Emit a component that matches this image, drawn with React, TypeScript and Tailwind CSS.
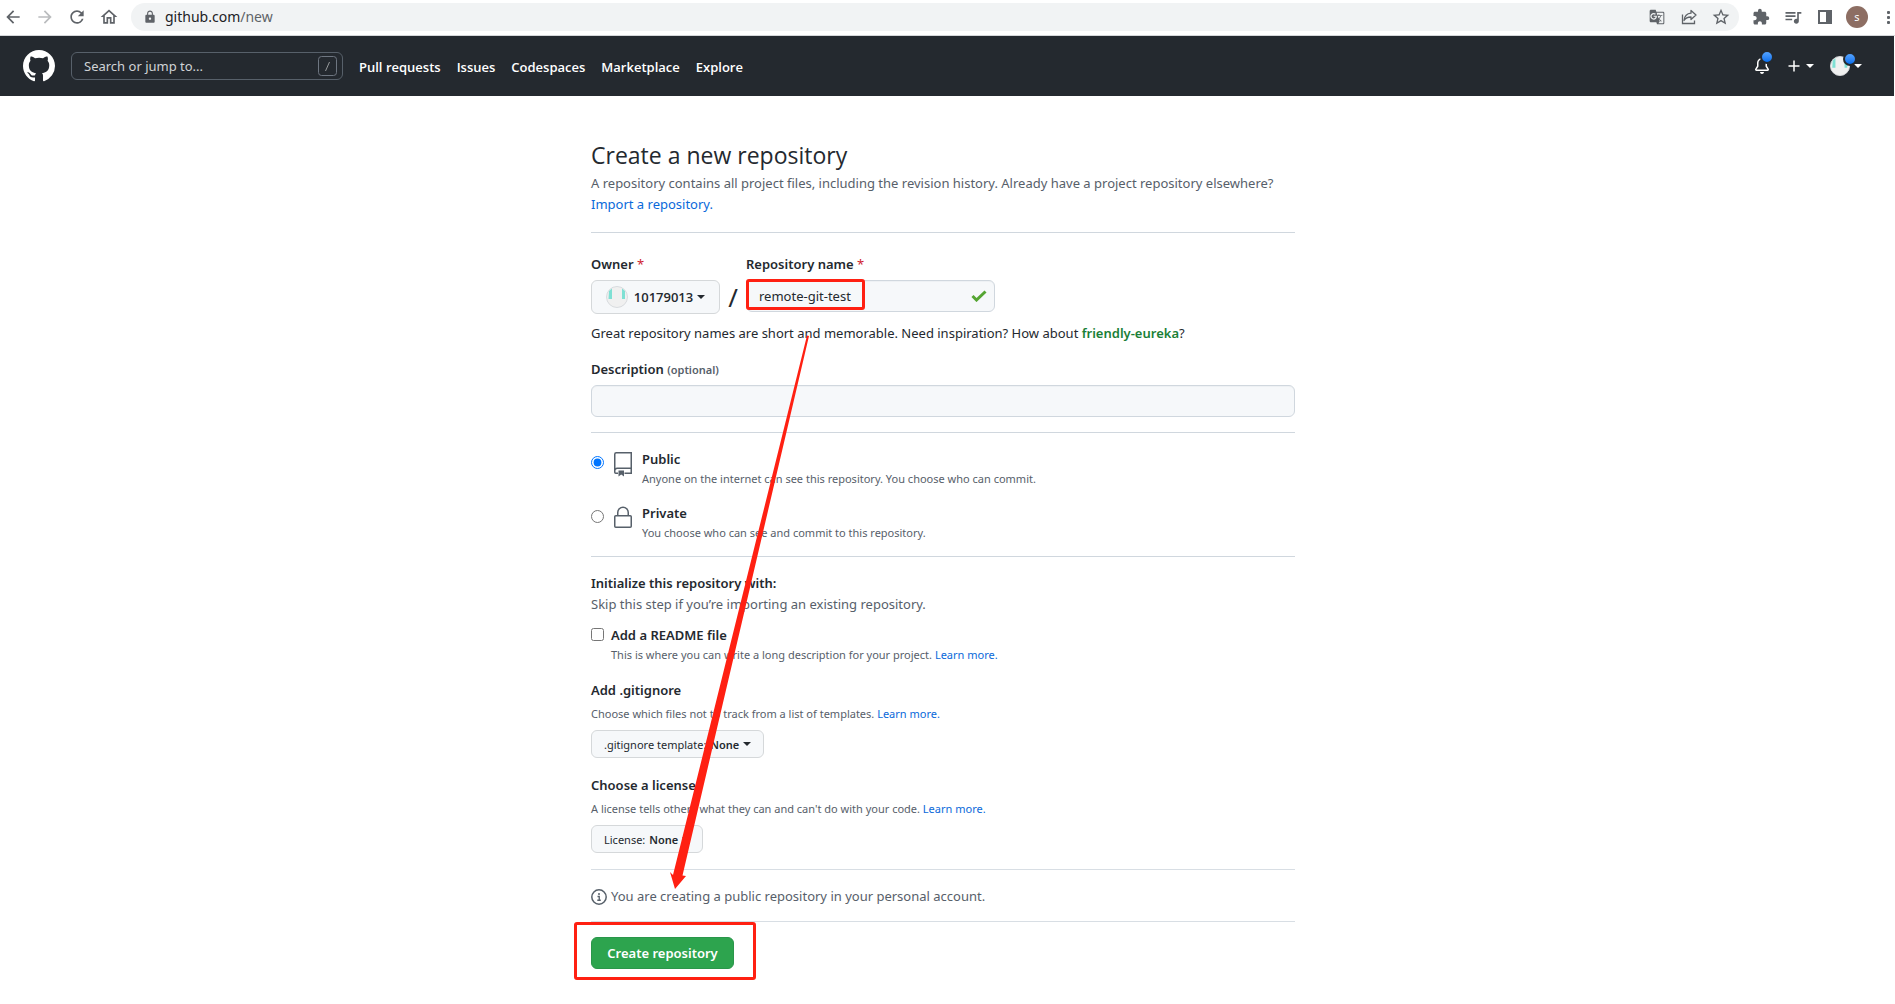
import type { ReactNode } from "react";
import {
  MdArrowBack,
  MdArrowForward,
  MdExtension,
  MdGTranslate,
  MdLock,
  MdOutlineHome,
  MdQueueMusic,
  MdRefresh,
  MdStarBorder,
} from "react-icons/md";

const navLinks = ["Pull requests", "Issues", "Codespaces", "Marketplace", "Explore"];

function Caret({ className = "" }: { className?: string }) {
  return (
    <span
      className={`inline-block border-x-4 border-t-4 border-x-transparent border-t-current align-middle ${className}`}
    />
  );
}

function Identicon({ className = "" }: { className?: string }) {
  return (
    <svg viewBox="0 0 22 22" className={className} aria-hidden="true">
      <circle cx="11" cy="11" r="10.5" fill="#f0f0f0" stroke="#d8dbde" />
      <path d="M3 5l3-2.5V13H2.5zM16 2.5L19 5v8h-3z" fill="#7fe0d4" />
    </svg>
  );
}

function LearnMore() {
  return (
    <a href="#" className="text-[#0969da] hover:underline">
      Learn more.
    </a>
  );
}

function BrowserBar() {
  return (
    <div className="flex h-9 items-center gap-3 border-b border-[#d5d7da] bg-white pl-[3px] pb-px text-[#5f6368]">
      <button aria-label="Back"><MdArrowBack size={20} /></button>
      <button aria-label="Forward" className="text-[#babcbe]"><MdArrowForward size={20} /></button>
      <button aria-label="Reload"><MdRefresh size={20} /></button>
      <button aria-label="Home"><MdOutlineHome size={20} /></button>
      <div className="flex h-7 flex-1 items-center gap-3 rounded-full bg-[#f1f3f4] pr-2 pl-3">
        <div className="flex flex-1 items-center gap-2">
          <MdLock size={14} />
          <span className="text-[14px] leading-5">
            <span className="text-[#202124]">github.com</span>/new
          </span>
        </div>
        <button aria-label="Translate" className="flex w-5 justify-center"><MdGTranslate size={16} /></button>
        <button aria-label="Share">
          <svg viewBox="0 0 20 20" className="size-5" fill="none" stroke="currentColor" strokeWidth="1.3">
            <path d="M3.5 7.5v9h12v-3" />
            <path d="M12 3.5l5 4.5-5 4.5V10c-3.5 0-5.5 1-7 3.5.5-4 3-7 7-7.3z" strokeLinejoin="round" />
          </svg>
        </button>
        <button aria-label="Bookmark"><MdStarBorder size={20} /></button>
      </div>
      <button aria-label="Extensions" className="flex w-5 justify-center"><MdExtension size={18} /></button>
      <button aria-label="Media"><MdQueueMusic size={20} /></button>
      <button aria-label="Side panel">
        <svg viewBox="0 0 20 20" className="size-5">
          <path fill="currentColor" fillRule="evenodd" d="M3 3h14v14H3zM5 5v10h6V5z" />
        </svg>
      </button>
      <button className="-mx-px size-[22px] rounded-full bg-[#8d6e63] text-[11px] leading-[22px] text-white">s</button>
      <button aria-label="Menu" className="ml-1">
        <svg viewBox="0 0 12 20" className="h-5 w-3" fill="currentColor">
          <rect x="4" y="4" width="3" height="3" rx="1" />
          <rect x="4" y="9" width="3" height="3" rx="1" />
          <rect x="4" y="14" width="3" height="3" rx="1" />
        </svg>
      </button>
    </div>
  );
}

function SiteHeader() {
  return (
    <header className="mr-px flex h-15 items-center bg-[#24292f] pr-8 pl-[23px] text-white">
      <a href="#" aria-label="Homepage">
        <svg viewBox="0 0 16 16" className="size-8" fill="currentColor">
          <path d="M8 0C3.58 0 0 3.58 0 8c0 3.54 2.29 6.53 5.47 7.59.4.07.55-.17.55-.38 0-.19-.01-.82-.01-1.49-2.01.37-2.53-.49-2.69-.94-.09-.23-.48-.94-.82-1.13-.28-.15-.68-.52-.01-.53.63-.01 1.08.58 1.23.82.72 1.21 1.87.87 2.33.66.07-.52.28-.87.51-1.07-1.78-.2-3.64-.89-3.64-3.95 0-.87.31-1.59.82-2.15-.08-.2-.36-1.02.08-2.12 0 0 .67-.21 2.2.82.64-.18 1.32-.27 2-.27.68 0 1.36.09 2 .27 1.53-1.04 2.2-.82 2.2-.82.44 1.1.16 1.92.08 2.12.51.56.82 1.27.82 2.15 0 3.07-1.87 3.75-3.65 3.95.29.25.54.73.54 1.48 0 1.07-.01 1.93-.01 2.2 0 .21.15.46.55.38A8.013 8.013 0 0016 8c0-4.42-3.58-8-8-8z" />
        </svg>
      </a>
      <label className="ml-4 flex h-7 w-[272px] items-center rounded-md border border-[#57606a] pr-[5px] pl-3">
        <input
          type="text"
          aria-label="Search"
          placeholder="Search or jump to..."
          className="min-w-0 flex-1 bg-transparent outline-none placeholder:text-[#d0d3d6]"
        />
        <svg viewBox="0 0 19 20" className="h-5 w-[19px]" fill="none" stroke="#6e7681">
          <rect x="0.5" y="0.5" width="18" height="19" rx="3" />
          <path d="M11.5 6l-4 9" stroke="#979a9c" />
        </svg>
      </label>
      <nav className="ml-4 flex gap-4 pt-0.5 font-['Open_Sans','Noto_Sans',sans-serif] font-semibold">
        {navLinks.map((label) => (
          <a key={label} href="#">{label}</a>
        ))}
      </nav>
      <div className="ml-auto flex items-center">
        <button aria-label="Notifications" className="relative">
          <svg viewBox="0 0 16 16" className="size-4" fill="currentColor">
            <path d="M8 16a2 2 0 001.985-1.75c.017-.137-.097-.25-.235-.25h-3.5c-.138 0-.252.113-.235.25A2 2 0 008 16z" />
            <path fillRule="evenodd" d="M8 1.5A3.5 3.5 0 004.5 5v2.947c0 .346-.102.683-.294.97l-1.703 2.556a.018.018 0 00-.003.01l.001.006c0 .002.002.004.004.006a.017.017 0 00.006.004l.007.001h10.964l.007-.001a.016.016 0 00.006-.004.016.016 0 00.004-.006l.001-.007a.017.017 0 00-.003-.01l-1.703-2.554a1.75 1.75 0 01-.294-.97V5A3.5 3.5 0 008 1.5zM3 5a5 5 0 0110 0v2.947c0 .05.015.098.042.139l1.703 2.555A1.518 1.518 0 0113.482 13H2.518a1.518 1.518 0 01-1.263-2.36l1.703-2.554A.25.25 0 003 7.947V5z" />
          </svg>
          <span className="absolute -top-2 left-1.5 size-3.5 rounded-full border-2 border-[#24292f] bg-linear-to-b from-[#54a3ff] to-[#006eed]" />
        </button>
        <button aria-label="Create new" className="ml-4 flex items-center gap-1">
          <svg viewBox="0 0 16 16" className="size-4" stroke="currentColor" strokeWidth="1.5">
            <path d="M2.5 8h11M8 2.5v11" />
          </svg>
          <Caret />
        </button>
        <button aria-label="Account" className="relative ml-4 flex items-center gap-1">
          <Identicon className="size-5" />
          <Caret />
          <span className="absolute -top-1 left-[13px] size-3.5 rounded-full border-2 border-[#24292f] bg-linear-to-b from-[#54a3ff] to-[#006eed]" />
        </button>
      </div>
    </header>
  );
}

function VisibilityOption(props: { id: string; title: string; note: string; checked?: boolean; icon: ReactNode }) {
  return (
    <div className="flex">
      <input
        type="radio"
        name="visibility"
        id={props.id}
        defaultChecked={props.checked}
        className="mt-[7px] size-[13px] accent-[#0075ff]"
      />
      <span className="mt-[3px] ml-[7px] text-[#57606a]">{props.icon}</span>
      <div className="ml-[7px]">
        <label htmlFor={props.id} className="block font-semibold">{props.title}</label>
        <p className="text-[11px] leading-[18px] text-[#57606a]">{props.note}</p>
      </div>
    </div>
  );
}

function PickerButton({ label }: { label: string }) {
  return (
    <button
      type="button"
      className="mt-[7px] flex h-7 items-center rounded-md border border-[#d5d8da] bg-[#f6f8fa] px-3 text-[11px]"
    >
      {label}:<span className="ml-1 font-semibold">None</span>
      <Caret className="ml-1" />
    </button>
  );
}

function NewRepositoryForm() {
  return (
    <form className="relative mx-auto max-w-[704px]">
      <h1 className="font-['Open_Sans','Noto_Sans',sans-serif] text-[23px] leading-9">Create a new repository</h1>
      <p className="text-[#57606a]">
        A repository contains all project files, including the revision history. Already have a project repository elsewhere?
        <a href="#" className="block text-[#0969da] hover:underline">Import a repository.</a>
      </p>

      <div className="mt-[17px] flex border-t border-[#d0d7de] pt-[21px]">
        <div>
          <span className="block font-semibold">
            Owner <span className="font-normal text-[#cf222e]">*</span>
          </span>
          <button
            type="button"
            className="mt-[5px] flex h-[34px] w-[129px] items-center justify-center rounded-md border border-[#d5d8da] bg-[#f6f8fa] font-['Open_Sans','Noto_Sans',sans-serif] font-semibold"
          >
            <Identicon className="mr-1.5 size-[22px]" />
            10179013
            <Caret className="ml-1" />
          </button>
        </div>
        <span className="mt-[26px] w-[26px] text-center text-[26px] leading-[34px]">/</span>
        <div>
          <label htmlFor="repo-name" className="block font-semibold">
            Repository name <span className="font-normal text-[#cf222e]">*</span>
          </label>
          <div className="relative mt-[5px]">
            <input
              id="repo-name"
              defaultValue="remote-git-test"
              className="h-8 w-[249px] rounded-md border border-[#d0d7de] bg-[#f6f8fa] px-3 shadow-[inset_0_1px_0_rgba(208,215,222,0.2)] outline-none"
            />
            <svg viewBox="0 0 16 12" className="absolute top-2.5 right-2 h-3 w-4" fill="none" stroke="#55a532" strokeWidth="3">
              <path d="M1.5 6l4 4 9-8.5" />
            </svg>
            <span className="pointer-events-none absolute -top-px left-0 h-[31px] w-[119px] rounded-[3px] border-3 border-[#ff2012]" />
          </div>
        </div>
      </div>
      <p className="mt-[9px]">
        Great repository names are short and memorable. Need inspiration? How about{" "}
        <strong className="font-semibold text-[#1a7f37]">friendly-eureka</strong>?
      </p>

      <label htmlFor="description" className="mt-[15px] block font-semibold">
        Description <span className="text-[11px] text-[#57606a]">(optional)</span>
      </label>
      <input
        id="description"
        className="mt-[5px] block h-8 w-full rounded-md border border-[#d0d7de] bg-[#f6f8fa] px-3 shadow-[inset_0_1px_0_rgba(208,215,222,0.2)] outline-none"
      />

      <div className="mt-[15px] flex flex-col gap-[15px] border-y border-[#d0d7de] pt-4 pb-3.5">
        <VisibilityOption
          id="public"
          title="Public"
          note="Anyone on the internet can see this repository. You choose who can commit."
          checked
          icon={
            <svg viewBox="0 0 24 24" className="size-6 overflow-visible" fill="none" stroke="currentColor" strokeWidth="1.5">
              <path d="M7 21.25H4.75a1 1 0 01-1-1V2.25a1.5 1.5 0 011.5-1.5h15v20.5H13.5M3.75 18.5a2.5 2.5 0 012.5-2.25h14" />
              <path d="M7.5 18.5v6l2.750-2 2.750 2v-6z" fill="currentColor" stroke="none" />
            </svg>
          }
        />
        <VisibilityOption
          id="private"
          title="Private"
          note="You choose who can see and commit to this repository."
          icon={
            <svg viewBox="0 0 24 24" className="size-6" fill="none" stroke="currentColor" strokeWidth="1.5">
              <rect x="3.75" y="9.75" width="16.5" height="11.5" rx="1" />
              <path d="M6.75 9.5V6.5a5.25 5.25 0 0110.5 0v3" />
            </svg>
          }
        />
      </div>

      <h2 className="mt-4 font-semibold">Initialize this repository with:</h2>
      <p className="text-[#57606a]">Skip this step if you&rsquo;re importing an existing repository.</p>

      <div className="mt-2.5 flex">
        <input type="checkbox" id="readme" className="mt-[3px] size-[13px]" />
        <div className="ml-[7px]">
          <label htmlFor="readme" className="block font-semibold">Add a README file</label>
          <p className="text-[11px] leading-[18px] text-[#57606a]">
            This is where you can write a long description for your project. <LearnMore />
          </p>
        </div>
      </div>

      <h2 className="mt-4 font-semibold">Add .gitignore</h2>
      <p className="mt-1 text-[11px] leading-[18px] text-[#57606a]">
        Choose which files not to track from a list of templates. <LearnMore />
      </p>
      <PickerButton label=".gitignore template" />

      <h2 className="mt-[17px] font-semibold">Choose a license</h2>
      <p className="mt-1 text-[11px] leading-[18px] text-[#57606a]">
        A license tells others what they can and can&apos;t do with your code. <LearnMore />
      </p>
      <PickerButton label="License" />

      <div className="mt-4 flex items-center gap-1 border-y border-[#d8dee4] pt-4 pb-3.5 text-[#57606a]">
        <svg viewBox="0 0 16 16" className="size-4" fill="none" stroke="currentColor" strokeWidth="1.5">
          <circle cx="8" cy="8" r="7.2" />
          <path d="M6.5 7.5h1.75v3.75M6.3 11.25h3.5" strokeWidth="1.3" />
          <circle cx="8" cy="5" r="1" fill="currentColor" stroke="none" />
        </svg>
        <p>You are creating a public repository in your personal account.</p>
      </div>

      <div className="relative mt-[15px]">
        <button
          type="submit"
          className="h-8 w-[143px] rounded-md border border-[#2a964a] bg-[#2da44e] font-semibold text-white"
        >
          Create repository
        </button>
        <span className="pointer-events-none absolute -top-[15px] -left-[17px] h-[58px] w-[182px] rounded-[3px] border-3 border-[#ff2012]" />
      </div>

      {/* Arrow from the name field down to the submit button */}
      <svg viewBox="0 0 144 556" className="pointer-events-none absolute top-[198px] left-[78px] h-[556px] w-36" fill="#ff2012">
        <path d="M138 0.5L140 1 13.5 540.5 17 541 6 554 1 537 4 540z" />
      </svg>
    </form>
  );
}

export default function App() {
  return (
    <div className="min-h-screen bg-white font-['Noto_Sans','Open_Sans',sans-serif] text-[13px] leading-[21px] text-[#24292f]">
      <BrowserBar />
      <SiteHeader />
      <main className="pt-[41px] pr-[9px] pb-8">
        <NewRepositoryForm />
      </main>
    </div>
  );
}
